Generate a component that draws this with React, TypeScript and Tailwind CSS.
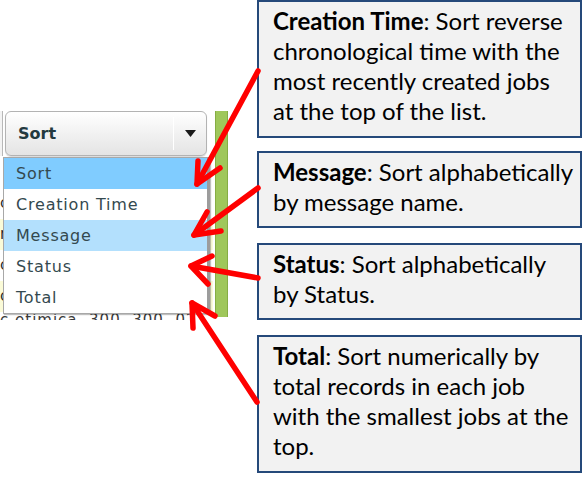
import React from "react";

const boxFont = { fontFamily: "Lato, 'Open Sans', sans-serif" };
const uiFont = { fontFamily: "'DejaVu Sans', Verdana, sans-serif" };

function Box({ h, children }: { h: string; children: React.ReactNode }) {
  return (
    <div
      className={`${h} w-[325px] border-2 border-[#25497a] bg-[#f2f2f2] pl-[14px] pt-[4px] text-[24px] leading-[30px] text-black whitespace-nowrap`}
      style={boxFont}
    >
      {children}
    </div>
  );
}

function Arrow({ x1, y1, x2, y2, a1, a2 }: { x1: number; y1: number; x2: number; y2: number; a1: [number, number]; a2: [number, number] }) {
  return (
    <g stroke="#ff0000" strokeWidth={5.5} strokeLinecap="round" strokeLinejoin="round" fill="none">
      <line x1={x1} y1={y1} x2={x2} y2={y2} />
      <polyline points={`${a1[0]},${a1[1]} ${x2},${y2} ${a2[0]},${a2[1]}`} />
    </g>
  );
}

export default function App() {
  const items = ["Sort", "Creation Time", "Message", "Status", "Total"];
  return (
    <div className="relative w-[585px] h-[478px] bg-white overflow-hidden flex">
      {/* Left UI screenshot */}
      <div className="w-[257px] pt-[110px]">
        <div className="flex h-[210px] overflow-hidden">
          <div className="relative w-[213px] h-[210px]">
            {/* left edge slice of previous control */}
            <div className="absolute left-0 top-[1px] w-[3px] h-[45px] border-r border-[#b8b8b8] bg-[#f3f3f3]" />
            {/* button */}
            <div className="ml-[5px] mt-[1px] w-[202px] h-[45px] rounded-[6px] border border-[#b3b3b3] bg-gradient-to-b from-[#ffffff] to-[#e4e4e4] flex items-center shadow-[0_1px_1px_rgba(0,0,0,0.15)]">
              <span className="pl-[12px] text-[16px] font-bold text-[#23393f] flex-1" style={uiFont}>
                Sort
              </span>
              <div className="w-[1px] h-[33px] bg-[#c8c8c8] border-r border-white" />
              <div className="w-[32px] flex justify-center">
                <svg width="11" height="7" viewBox="0 0 11 7">
                  <polygon points="0,0 11,0 5.5,7" fill="#1a1a1a" />
                </svg>
              </div>
            </div>
            {/* background table rows */}
            <div className="mt-[1px] flex flex-col text-[15px] text-[#2a2a2a]" style={uiFont}>
              <div className="h-[31px] bg-white" />
              <div className="h-[31px] bg-white leading-[31px]">c</div>
              <div className="h-[31px] bg-[#fbfbd8] leading-[31px]">n</div>
              <div className="h-[31px] bg-white leading-[31px]">c</div>
              <div className="h-[31px] bg-[#fbfbd8] leading-[31px]">c</div>
              <div className="h-[20px] bg-white leading-[16px] whitespace-nowrap tracking-[1px] text-[#3a3a3a]">c etimica&nbsp;&nbsp;300&nbsp;&nbsp;300&nbsp;&nbsp;02</div>
            </div>
            {/* dropdown list */}
            <div className="absolute left-[3px] top-[47px] w-[207px] h-[157px] bg-white border border-[#a8a8a8] border-r-[3px] border-r-[#9c9c9c] shadow-[1px_1px_1px_rgba(0,0,0,0.25)] flex flex-col" style={uiFont}>
              {items.map((t, i) => (
                <div
                  key={t}
                  className={`h-[31px] pl-[12px] flex items-center text-[16px] tracking-[0.8px] text-[#34494f] ${
                    i === 0 ? "bg-[#80ccff]" : i === 2 ? "bg-[#b3e0fd]" : "bg-white"
                  }`}
                >
                  {t}
                </div>
              ))}
            </div>
          </div>
          <div className="ml-[2px] mt-[1px] w-[13px] h-[206px] bg-[#9fc75b] border-l border-r border-[#86ad44]" />
        </div>
      </div>

      {/* Right description boxes */}
      <div className="flex flex-col">
        <Box h="h-[138px]">
          <div><b>Creation Time</b>: Sort reverse</div>
          <div>chronological time with the</div>
          <div>most recently created jobs</div>
          <div>at the top of the list.</div>
        </Box>
        <div className="mt-[13px]">
          <Box h="h-[77px]">
            <div><b>Message</b>: Sort alphabetically</div>
            <div>by message name.</div>
          </Box>
        </div>
        <div className="mt-[15px]">
          <Box h="h-[77px]">
            <div><b>Status</b>: Sort alphabetically</div>
            <div>by Status.</div>
          </Box>
        </div>
        <div className="mt-[15px]">
          <Box h="h-[138px]">
            <div><b>Total</b>: Sort numerically by</div>
            <div>total records in each job</div>
            <div>with the smallest jobs at the</div>
            <div>top.</div>
          </Box>
        </div>
      </div>

      {/* Arrows overlay */}
      <svg className="absolute inset-0 pointer-events-none" width="585" height="478" viewBox="0 0 585 478">
        <Arrow x1={258} y1={71} x2={197} y2={184} a1={[198, 161]} a2={[220, 168]} />
        <Arrow x1={258} y1={188} x2={194} y2={235} a1={[207, 212]} a2={[221, 231]} />
        <Arrow x1={258} y1={278} x2={191} y2={266} a1={[212, 256]} a2={[208, 284]} />
        <Arrow x1={257} y1={402} x2={192} y2={303} a1={[193, 328]} a2={[215, 316]} />
      </svg>
    </div>
  );
}
